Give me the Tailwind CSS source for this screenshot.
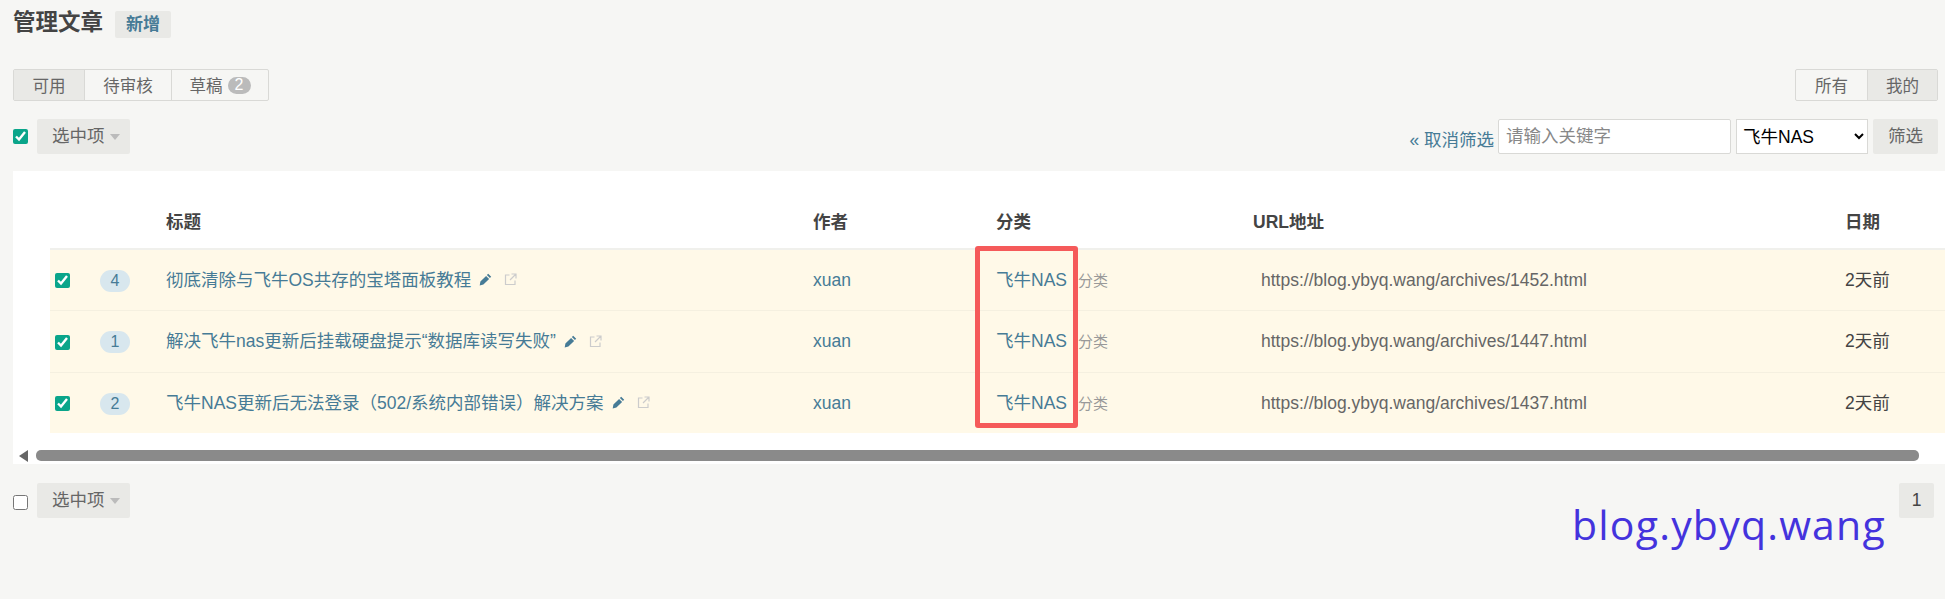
<!DOCTYPE html>
<html lang="zh-CN">
<head>
  <meta charset="UTF-8">
  <title>管理文章</title>
  <script src="https://cdn.jsdelivr.net/npm/@tailwindcss/browser@4"></script>
</head>
<body class="relative h-[599px] w-[1945px] overflow-hidden bg-[#f6f6f4] font-['Liberation_Sans','Noto_Sans_CJK_SC',sans-serif] text-[17.5px] text-[#444]">

  <!-- Page title -->
  <div class="flex h-[38px] items-end pl-[13px]">
    <h1 class="text-[22.5px] leading-[30px] font-bold text-[#444]">管理文章</h1>
    <a class="ml-[12px] flex h-[27px] w-[56px] items-center justify-center rounded-[2px] bg-[#e9e9e6] text-[17px] font-bold text-[#467b96]">新增</a>
  </div>

  <!-- Status tabs -->
  <div class="mt-[31px] flex justify-between pr-[7px] pl-[13px] text-[16.5px] text-[#666]">
    <div class="flex h-[32px] w-[256px] rounded-[2px] border border-[#d9d9d6]">
      <span class="flex w-[70px] items-center justify-center bg-[#e9e9e6] pt-[2px]">可用</span>
      <span class="flex w-[87px] items-center justify-center border-l border-[#d9d9d6] pt-[2px]">待审核</span>
      <span class="flex flex-1 items-center justify-center gap-[5px] border-l border-[#d9d9d6]"><span class="pt-[2px]">草稿</span><b class="flex h-[17px] w-[23px] items-center justify-center rounded-full bg-[#bbb] text-[16px] font-normal text-white">2</b></span>
    </div>
    <div class="flex h-[32px] w-[143px] rounded-[2px] border border-[#d9d9d6]">
      <span class="flex w-[71px] items-center justify-center pt-[2px]">所有</span>
      <span class="flex flex-1 items-center justify-center border-l border-[#d9d9d6] bg-[#e9e9e6] pt-[2px]">我的</span>
    </div>
  </div>

  <!-- Actions and filter -->
  <div class="mt-[18px] flex h-[35px] items-center justify-between pr-[7px] pl-[13px]">
    <div class="flex items-center gap-[9px]">
      <input type="checkbox" checked class="h-[15px] w-[15px] accent-[#0aa58a]">
      <button class="flex h-[35px] w-[93px] items-center gap-[5px] rounded-[2px] bg-[#e9e9e6] pl-[15px] text-[17.5px] text-[#666]">选中项<i class="mt-[1px] h-0 w-0 border-x-[5px] border-t-[6px] border-x-transparent border-t-[#bbb]"></i></button>
    </div>
    <div class="flex items-center">
      <a class="mt-[8px] mr-[4px] text-[#467b96]">« 取消筛选</a>
      <input type="text" placeholder="请输入关键字" class="h-[35px] w-[233px] rounded-[2px] border border-[#d9d9d6] bg-white px-[7px] text-[17.5px] placeholder:text-[#888]">
      <select class="ml-[5px] h-[35px] w-[132px] border border-[#d9d9d6] bg-white pl-[2px] text-[17.5px] text-black">
        <option>飞牛NAS</option>
      </select>
      <button class="ml-[5px] h-[35px] w-[65px] rounded-[2px] bg-[#e9e9e6] text-[17.5px] text-[#666]">筛选</button>
    </div>
  </div>

  <!-- Post list -->
  <div class="mt-[17px] ml-[13px] h-[293px] overflow-hidden bg-white">
    <div class="pl-[37px]">
      <table class="w-[1895px] table-fixed border-collapse text-left">
        <colgroup>
          <col class="w-[50px]"><col class="w-[66px]"><col class="w-[647px]"><col class="w-[183px]"><col class="w-[257px]"><col class="w-[592px]"><col class="w-[100px]">
        </colgroup>
        <thead>
          <tr class="h-[78px] border-b-2 border-[#f0f0ec] align-top font-bold text-[#444]">
            <th></th>
            <th></th>
            <th class="pt-[39px] text-[17.5px] leading-[24px]">标题</th>
            <th class="pt-[39px] text-[17.5px] leading-[24px]">作者</th>
            <th class="pt-[39px] text-[17.5px] leading-[24px]">分类</th>
            <th class="pt-[39px] text-[17.5px] leading-[24px]">URL地址</th>
            <th class="pt-[39px] text-[17.5px] leading-[24px]">日期</th>
          </tr>
        </thead>
        <tbody class="bg-[#fff9e8]">
          <tr class="h-[61px] border-b border-[#f5f0e0]">
            <td class="pt-[2px] pl-[5px]"><input type="checkbox" checked class="block h-[15px] w-[15px] accent-[#0aa58a]"></td>
            <td class="pt-[2px]"><span class="flex h-[22px] w-[30px] items-center justify-center rounded-[11px] bg-[#d8e7ee] text-[16px] text-[#467b96]">4</span></td>
            <td class="text-[#467b96]">
              <span class="flex items-center">彻底清除与飞牛OS共存的宝塔面板教程
                <svg class="ml-[8px]" width="13" height="13" viewBox="0 0 13 13"><path d="M9.2 .8l3 3-1.300 1.300-3-3zM7.100 2.900l3 3-5.700 5.700-3.700.8.700-3.800z" fill="#467b96"/></svg>
                <svg class="ml-[12px]" width="13" height="13" viewBox="0 0 13 13" fill="none" stroke="#ccc" stroke-width="1.200"><path d="M5.500 2H1.500v9.500H11V7.500M7.500 1H12v4.500M12 1L6 7"/></svg>
              </span>
            </td>
            <td class="text-[#467b96]">xuan</td>
            <td><span class="text-[#467b96]">飞牛NAS</span><span class="ml-[11px] text-[15px] text-[#999]">分类</span></td>
            <td class="pl-[8px] text-[#666]">https://blog.ybyq.wang/archives/1452.html</td>
            <td>2天前</td>
          </tr>
          <tr class="h-[62px] border-b border-[#f5f0e0]">
            <td class="pt-[2px] pl-[5px]"><input type="checkbox" checked class="block h-[15px] w-[15px] accent-[#0aa58a]"></td>
            <td class="pt-[2px]"><span class="flex h-[22px] w-[30px] items-center justify-center rounded-[11px] bg-[#d8e7ee] text-[16px] text-[#467b96]">1</span></td>
            <td class="pt-[1px] text-[#467b96]">
              <span class="flex items-center">解决飞牛nas更新后挂载硬盘提示“数据库读写失败”
                <svg class="ml-[8px]" width="13" height="13" viewBox="0 0 13 13"><path d="M9.2 .8l3 3-1.300 1.300-3-3zM7.100 2.900l3 3-5.700 5.700-3.700.8.700-3.800z" fill="#467b96"/></svg>
                <svg class="ml-[12px]" width="13" height="13" viewBox="0 0 13 13" fill="none" stroke="#ccc" stroke-width="1.200"><path d="M5.500 2H1.500v9.500H11V7.500M7.500 1H12v4.500M12 1L6 7"/></svg>
              </span>
            </td>
            <td class="pt-[1px] text-[#467b96]">xuan</td>
            <td class="pt-[1px]"><span class="text-[#467b96]">飞牛NAS</span><span class="ml-[11px] text-[15px] text-[#999]">分类</span></td>
            <td class="pt-[1px] pl-[8px] text-[#666]">https://blog.ybyq.wang/archives/1447.html</td>
            <td class="pt-[1px]">2天前</td>
          </tr>
          <tr class="h-[61px]">
            <td class="pt-[2px] pl-[5px]"><input type="checkbox" checked class="block h-[15px] w-[15px] accent-[#0aa58a]"></td>
            <td class="pt-[2px]"><span class="flex h-[22px] w-[30px] items-center justify-center rounded-[11px] bg-[#d8e7ee] text-[16px] text-[#467b96]">2</span></td>
            <td class="text-[#467b96]">
              <span class="flex items-center">飞牛NAS更新后无法登录（502/系统内部错误）解决方案
                <svg class="ml-[8px]" width="13" height="13" viewBox="0 0 13 13"><path d="M9.2 .8l3 3-1.300 1.300-3-3zM7.100 2.900l3 3-5.700 5.700-3.700.8.700-3.800z" fill="#467b96"/></svg>
                <svg class="ml-[12px]" width="13" height="13" viewBox="0 0 13 13" fill="none" stroke="#ccc" stroke-width="1.200"><path d="M5.500 2H1.500v9.500H11V7.500M7.500 1H12v4.500M12 1L6 7"/></svg>
              </span>
            </td>
            <td class="text-[#467b96]">xuan</td>
            <td><span class="text-[#467b96]">飞牛NAS</span><span class="ml-[11px] text-[15px] text-[#999]">分类</span></td>
            <td class="pl-[8px] text-[#666]">https://blog.ybyq.wang/archives/1437.html</td>
            <td>2天前</td>
          </tr>
        </tbody>
      </table>
    </div>
    <!-- Horizontal scrollbar -->
    <div class="mt-[17px] flex h-[11px] items-center pl-[6px]">
      <i class="h-0 w-0 border-y-[6px] border-r-[9px] border-y-transparent border-r-[#666]"></i>
      <i class="ml-[8px] h-[11px] w-[1883px] rounded-[5px] bg-[#8a8a8a]"></i>
    </div>
  </div>

  <!-- Bottom actions -->
  <div class="mt-[19px] flex h-[35px] items-center justify-between pr-[11px] pl-[13px]">
    <div class="flex items-center gap-[9px]">
      <input type="checkbox" class="mt-[4px] h-[15px] w-[15px]">
      <button class="flex h-[35px] w-[93px] items-center gap-[5px] rounded-[2px] bg-[#e9e9e6] pl-[15px] text-[17.5px] text-[#666]">选中项<i class="mt-[1px] h-0 w-0 border-x-[5px] border-t-[6px] border-x-transparent border-t-[#bbb]"></i></button>
    </div>
    <span class="flex h-[35px] w-[35px] items-center justify-center rounded-[2px] bg-[#e9e9e6] text-[17.5px] text-[#444]">1</span>
  </div>

  <!-- Red highlight drawn over the category column -->
  <div class="absolute top-[246px] left-[975px] h-[182px] w-[103px] rounded-[3px] border-[5px] border-[#f55a5a]"></div>

  <!-- Watermark -->
  <div class="absolute top-[496px] left-[1572px] font-['Open_Sans',sans-serif] text-[41px] leading-[56px] tracking-[1.2px] text-[#4433dd]">blog.ybyq.wang</div>
</body>
</html>
